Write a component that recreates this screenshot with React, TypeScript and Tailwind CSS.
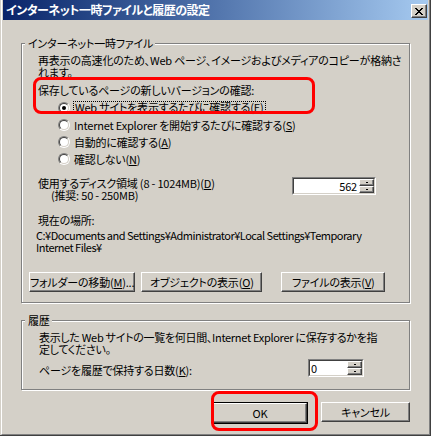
import React from 'react';

const font = "font-['Noto_Sans_CJK_JP','Noto_Sans',sans-serif] [font-feature-settings:'palt']";
const raised =
  'border border-t-white border-l-white border-r-[#404040] border-b-[#404040] shadow-[inset_-1px_-1px_0_#808080] bg-[#d4d0c8]';
const sunkenOuter = 'border border-t-[#808080] border-l-[#808080] border-r-white border-b-white';
const sunkenInner = 'border border-t-[#404040] border-l-[#404040] border-r-[#d4d0c8] border-b-[#d4d0c8]';

function Radio({ checked }: { checked?: boolean }) {
  return (
    <span className={`block w-[12px] h-[12px] rounded-full shrink-0 ${sunkenOuter}`}>
      <span className={`flex w-full h-full rounded-full bg-white items-center justify-center ${sunkenInner}`}>
        {checked && <span className="block w-[4px] h-[4px] rounded-full bg-black" />}
      </span>
    </span>
  );
}

function Spin({ value, right, width }: { value: string; right?: boolean; width: string }) {
  return (
    <div className={`flex h-[18px] ${width} ${sunkenOuter}`}>
      <div className={`flex flex-1 bg-white ${sunkenInner}`}>
        <div className={`flex-1 flex items-center ${right ? 'justify-end pr-[2px]' : 'pl-px'}`}>{value}</div>
        <div className="flex flex-col w-[15px]">
          <div className={`flex-1 flex items-center justify-center ${raised}`}>
            <span className="block w-[2px] h-px bg-black" />
          </div>
          <div className={`flex-1 flex items-center justify-center ${raised}`}>
            <span className="block w-[2px] h-px bg-black" />
          </div>
        </div>
      </div>
    </div>
  );
}

function Button({ children, width }: { children: React.ReactNode; width: string }) {
  return (
    <div className={`flex h-[20px] items-center justify-center ${width} ${raised}`}>{children}</div>
  );
}

export default function App() {
  return (
    <div
      className={`relative w-[431px] h-[436px] overflow-hidden bg-[#d4d0c8] pl-px border-r border-b border-[#404040] text-[11px] leading-[12px] tracking-[-0.2px] text-black ${font}`}
    >
      <div className="flex flex-col h-full px-px border-l border-l-white border-r border-r-[#808080] border-b border-b-[#808080]">
        {/* title bar */}
        <div className="flex items-center h-[20px] pl-[3px] pr-px bg-linear-to-r from-[#0a246a] to-[#a6caf0]">
          <span className="font-bold text-white text-[12px] tracking-[-0.5px] whitespace-nowrap">
            インターネット一時ファイルと履歴の設定
          </span>
          <div className={`ml-auto mt-[2px] flex w-[16px] h-[14px] items-center justify-center ${raised}`}>
            <svg width="8" height="7" viewBox="0 0 8 7" shapeRendering="crispEdges">
              <path
                fill="#000"
                d="M0 0h2v1H0zM6 0h2v1H6zM1 1h2v1H1zM5 1h2v1H5zM2 2h4v1H2zM3 3h2v1H3zM2 4h4v1H2zM1 5h2v1H1zM5 5h2v1H5zM0 6h2v1H0zM6 6h2v1H6z"
              />
            </svg>
          </div>
        </div>

        <div className="flex flex-col px-[18px]">
          {/* temporary files group */}
          <fieldset className="min-w-0 mt-[17px] border border-[#808080] shadow-[1px_1px_0_#fff,inset_1px_1px_0_#fff]">
            <legend className="ml-[3px] pl-[3px] pr-[2px] bg-[#d4d0c8] leading-[12px]">インターネット一時ファイル</legend>
            <div className="flex flex-col pt-[5px] pl-[16px] pr-[33px] pb-[10px] whitespace-nowrap">
              <p>
                再表示の高速化のため、Web ページ、イメージおよびメディアのコピーが格納さ
                <br />
                れます。
              </p>
              <p className="mt-[6px]">保存しているページの新しいバージョンの確認:</p>
              <div className="flex flex-col mt-[3px] pl-[20px]">
                <div className="flex items-center h-[17px] gap-[3px]">
                  <Radio checked />
                  <span className="px-px border border-dotted border-black leading-[11px]">
                    Web サイトを表示するたびに確認する(<u>E</u>)
                  </span>
                </div>
                <div className="flex items-center h-[17px] gap-[4px]">
                  <Radio />
                  <span>
                    Internet Explorer を開始するたびに確認する(<u>S</u>)
                  </span>
                </div>
                <div className="flex items-center h-[17px] gap-[4px]">
                  <Radio />
                  <span>
                    自動的に確認する(<u>A</u>)
                  </span>
                </div>
                <div className="flex items-center h-[17px] gap-[4px]">
                  <Radio />
                  <span>
                    確認しない(<u>N</u>)
                  </span>
                </div>
              </div>
              <div className="flex items-start mt-[10px]">
                <div className="flex flex-col">
                  <span>
                    使用するディスク領域 (8 - 1024MB)(<u>D</u>)
                  </span>
                  <span className="pl-[13px]">(推奨: 50 - 250MB)</span>
                </div>
                <div className="ml-auto">
                  <Spin value="562" right width="w-[84px]" />
                </div>
              </div>
              <p className="mt-[13px]">現在の場所:</p>
              <p className="mt-[3px] -ml-[2px] tracking-[-0.5px]">
                C:¥Documents and Settings¥Administrator¥Local Settings¥Temporary
                <br />
                Internet Files¥
              </p>
              <div className="flex mt-[19px] -ml-[9px]">
                <Button width="w-[114px]">
                  フォルダーの移動(<u>M</u>)...
                </Button>
                <div className="ml-[6px]">
                  <Button width="w-[121px]">
                    オブジェクトの表示(<u>O</u>)
                  </Button>
                </div>
                <div className="ml-[19px]">
                  <Button width="w-[104px]">
                    ファイルの表示(<u>V</u>)
                  </Button>
                </div>
              </div>
            </div>
          </fieldset>

          {/* history group */}
          <fieldset className="min-w-0 mt-[11px] border border-[#808080] shadow-[1px_1px_0_#fff,inset_1px_1px_0_#fff]">
            <legend className="ml-[3px] pl-[3px] pr-[2px] bg-[#d4d0c8] leading-[12px]">履歴</legend>
            <div className="flex flex-col pt-[5px] pl-[17px] pr-[45px] pb-[12px] whitespace-nowrap">
              <p className="tracking-[-0.3px]">
                表示した Web サイトの一覧を何日間、Internet Explorer に保存するかを指
                <br />
                定してください。
              </p>
              <div className="flex items-start mt-[4px]">
                <span className="mt-[5px]">
                  ページを履歴で保持する日数(<u>K</u>):
                </span>
                <div className="ml-auto">
                  <Spin value="0" width="w-[56px]" />
                </div>
              </div>
            </div>
          </fieldset>

          {/* dialog buttons */}
          <div className="flex justify-end mt-[12px] gap-[13px]">
            <div className="border border-black">
              <Button width="w-[94px] h-[18px]">OK</Button>
            </div>
            <Button width="w-[89px]">キャンセル</Button>
          </div>
        </div>
      </div>

      {/* red annotation marks */}
      <div className="absolute left-[33px] top-[77px] w-[282px] h-[37px] border-[3px] border-[#ff0000] rounded-[8px]" />
      <div className="absolute left-[211px] top-[391px] w-[107px] h-[40px] border-[3px] border-[#ff0000] rounded-[8px]" />
    </div>
  );
}
